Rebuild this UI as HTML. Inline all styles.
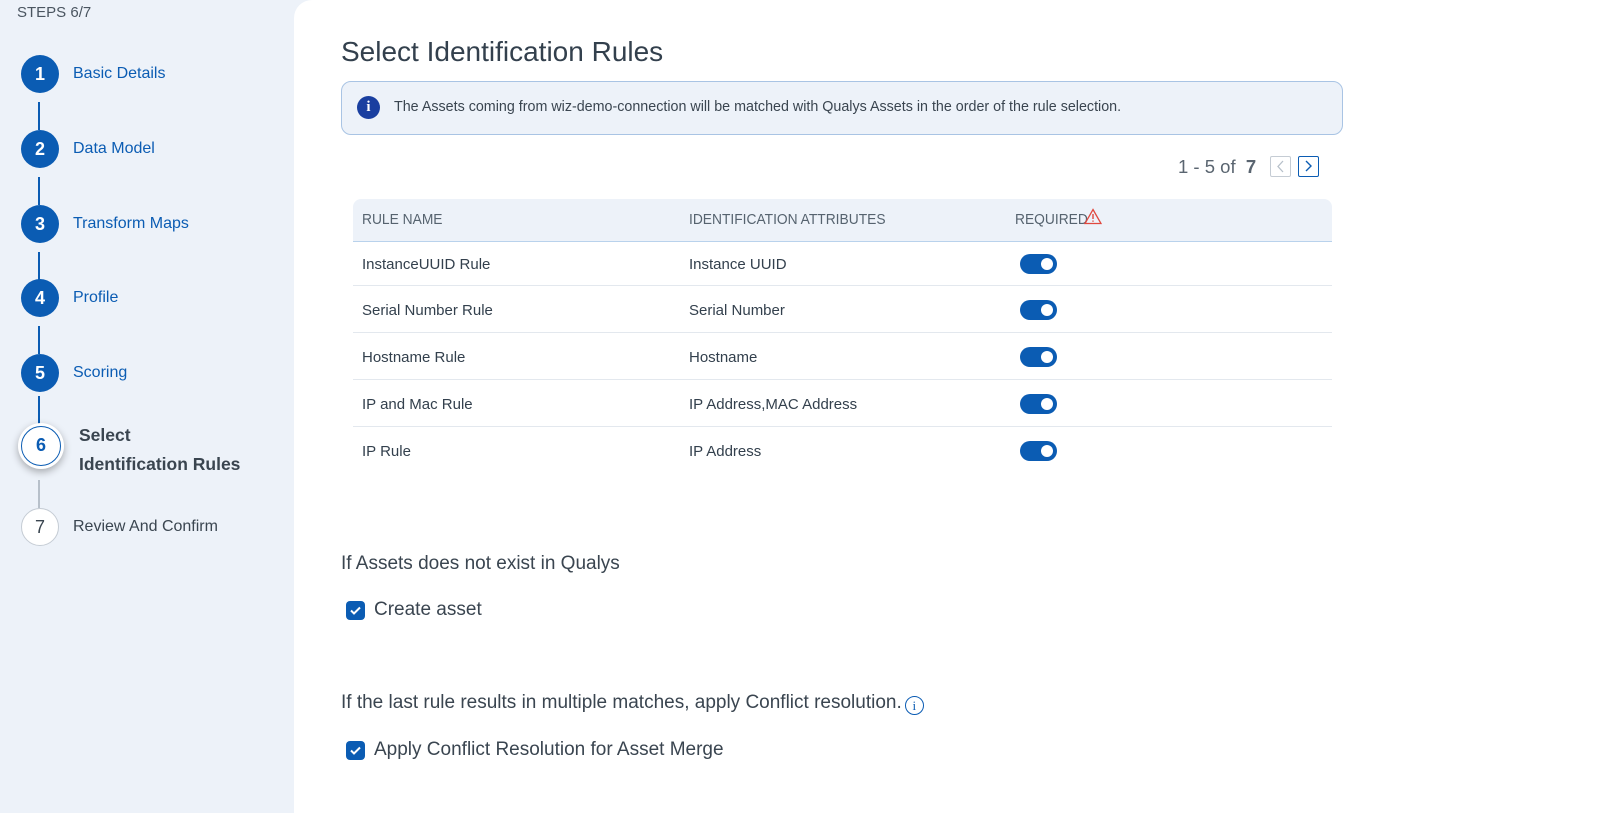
<!DOCTYPE html>
<html><head><style>
*{box-sizing:border-box;margin:0;padding:0}
body{width:1599px;height:813px;background:#edf2f9;font-family:"Liberation Sans",sans-serif;position:relative;overflow:hidden;color:#33404d}
.side{position:absolute;left:0;top:0;width:294px;height:813px;background:#edf2f9}
.main{position:absolute;left:294px;top:0;width:1305px;height:813px;background:#fff;border-top-left-radius:18px}
.abs{position:absolute}
.circ{position:absolute;width:38px;height:38px;border-radius:50%;background:#0b5cb3;color:#fff;font-size:18px;font-weight:bold;text-align:center;line-height:38px}
.lbl{position:absolute;font-size:16px;color:#0b5cb3}
.vl{position:absolute;left:38px;width:2px;background:#0b5cb3}
.row{position:absolute;left:353px;width:979px;height:47px;border-bottom:1px solid #e3e8ee;font-size:15px;color:#33404d}
.row span{position:absolute;top:14px}
.tog{position:absolute;left:667px;top:12px;width:37px;height:20px;border-radius:10px;background:#0b5cb3}
.tog:after{content:"";position:absolute;right:4px;top:4px;width:12px;height:12px;border-radius:50%;background:#fff}
.cb{position:absolute;width:19px;height:19px;border-radius:4px;background:#0b5cb3}
</style></head><body>
<div class="side">
<div class="abs" style="left:17px;top:4px;font-size:15px;color:#4a5560">STEPS 6/7</div>
<div class="circ" style="left:21px;top:55px">1</div><div class="lbl" style="left:73px;top:65px">Basic Details</div>
<div class="vl" style="top:102px;height:28px"></div>
<div class="circ" style="left:21px;top:130px">2</div><div class="lbl" style="left:73px;top:140px">Data Model</div>
<div class="vl" style="top:177px;height:28px"></div>
<div class="circ" style="left:21px;top:205px">3</div><div class="lbl" style="left:73px;top:215px">Transform Maps</div>
<div class="vl" style="top:252px;height:28px"></div>
<div class="circ" style="left:21px;top:279px">4</div><div class="lbl" style="left:73px;top:289px">Profile</div>
<div class="vl" style="top:326px;height:28px"></div>
<div class="circ" style="left:21px;top:354px">5</div><div class="lbl" style="left:73px;top:364px">Scoring</div>
<div class="vl" style="top:396px;height:28px"></div>
<div class="abs" style="left:18px;top:423px;width:46px;height:46px;border-radius:50%;background:#fff;box-shadow:0 3px 8px rgba(0,0,0,.3)"><div style="position:absolute;left:3px;top:3px;width:40px;height:40px;border-radius:50%;border:1.5px solid #0b5cb3;color:#0b5cb3;font-weight:bold;font-size:18px;text-align:center;line-height:37px">6</div></div>
<div class="abs" style="left:79px;top:421px;font-size:17.5px;font-weight:bold;color:#3a4550;line-height:29px">Select<br>Identification Rules</div>
<div class="abs" style="left:38px;top:480px;width:2px;height:28px;background:#b7c0ca"></div>
<div class="abs" style="left:21px;top:508px;width:38px;height:38px;border-radius:50%;background:#fff;border:1px solid #c5ccd4;text-align:center;line-height:36px;font-size:18px;color:#3a4550">7</div>
<div class="abs" style="left:73px;top:518px;font-size:16px;color:#3a4550">Review And Confirm</div>
</div>
<div class="main"></div>
<div class="abs" style="left:341px;top:36px;font-size:28px;color:#33404d">Select Identification Rules</div>
<div class="abs" style="left:341px;top:81px;width:1002px;height:54px;border:1px solid #a9c4e4;border-radius:10px;background:#edf2f9"></div>
<div class="abs" style="left:357px;top:96px;width:23px;height:23px;border-radius:50%;background:#1a3fa0;color:#fff;font-family:'Liberation Serif',serif;font-weight:bold;font-size:15px;text-align:center;line-height:23px">i</div>
<div class="abs" style="left:394px;top:99px;font-size:14.3px;color:#3a4550">The Assets coming from wiz-demo-connection will be matched with Qualys Assets in the order of the rule selection.</div>
<div class="abs" style="left:1178px;top:156px;font-size:18.5px;color:#5a6570">1 - 5 of&nbsp; <b>7</b></div>
<div class="abs" style="left:1270px;top:156px;width:21px;height:21px;border:1px solid #c5ccd4;border-radius:2px"><svg width="19" height="19"><path d="M12 4l-5 5.5 5 5.5" fill="none" stroke="#b7c0ca" stroke-width="1.3"/></svg></div>
<div class="abs" style="left:1298px;top:156px;width:21px;height:21px;border:1.5px solid #0b5cb3;border-radius:2px"><svg width="18" height="18"><path d="M7 4l5 5-5 5" fill="none" stroke="#0b5cb3" stroke-width="1.4"/></svg></div>
<div class="abs" style="left:353px;top:199px;width:979px;height:43px;background:#edf2f9;border-radius:8px 8px 0 0;border-bottom:1px solid #b9d2ec;font-size:15px;color:#56636f">
<span style="position:absolute;left:9px;top:12px;transform:scaleX(.92);transform-origin:left">RULE NAME</span>
<span style="position:absolute;left:336px;top:12px;transform:scaleX(.92);transform-origin:left">IDENTIFICATION ATTRIBUTES</span>
<span style="position:absolute;left:662px;top:12px;transform:scaleX(.92);transform-origin:left">REQUIRED</span>
<svg style="position:absolute;left:731px;top:9px" width="18" height="17"><path d="M9 1.5L17 15.5H1Z" fill="none" stroke="#e0483e" stroke-width="1.3"/><path d="M9 6v5M9 12.5v1.2" stroke="#e0483e" stroke-width="1.4"/></svg>
</div>
<div class="row" style="top:242px;height:44px"><span style="left:9px;top:14px">InstanceUUID Rule</span><span style="left:336px;top:14px">Instance UUID</span><div class="tog" style="top:12px"></div></div>
<div class="row" style="top:286px"><span style="left:9px;top:16px">Serial Number Rule</span><span style="left:336px;top:16px">Serial Number</span><div class="tog" style="top:14px"></div></div>
<div class="row" style="top:333px"><span style="left:9px;top:16px">Hostname Rule</span><span style="left:336px;top:16px">Hostname</span><div class="tog" style="top:14px"></div></div>
<div class="row" style="top:380px"><span style="left:9px;top:16px">IP and Mac Rule</span><span style="left:336px;top:16px">IP Address,MAC Address</span><div class="tog" style="top:14px"></div></div>
<div class="row" style="top:427px;border:none"><span style="left:9px;top:16px">IP Rule</span><span style="left:336px;top:16px">IP Address</span><div class="tog" style="top:14px"></div></div>
<div class="abs" style="left:341px;top:553px;font-size:19px;color:#3a4550">If Assets does not exist in Qualys</div>
<div class="cb" style="left:346px;top:601px"><svg width="19" height="19"><path d="M5 9.5l3 3 6-6" fill="none" stroke="#fff" stroke-width="2"/></svg></div>
<div class="abs" style="left:374px;top:599px;font-size:19px;color:#3a4550">Create asset</div>
<div class="abs" style="left:341px;top:692px;font-size:19px;color:#3a4550;white-space:nowrap">If the last rule results in multiple matches, apply Conflict resolution.<span style="display:inline-block;vertical-align:-2px;margin-left:3px;width:19px;height:19px;border-radius:50%;border:1.3px solid #0b5cb3;color:#0b5cb3;font-family:'Liberation Serif',serif;font-size:13px;text-align:center;line-height:17px">i</span></div>
<div class="cb" style="left:346px;top:741px"><svg width="19" height="19"><path d="M5 9.5l3 3 6-6" fill="none" stroke="#fff" stroke-width="2"/></svg></div>
<div class="abs" style="left:374px;top:739px;font-size:19px;color:#3a4550">Apply Conflict Resolution for Asset Merge</div>
</body></html>
